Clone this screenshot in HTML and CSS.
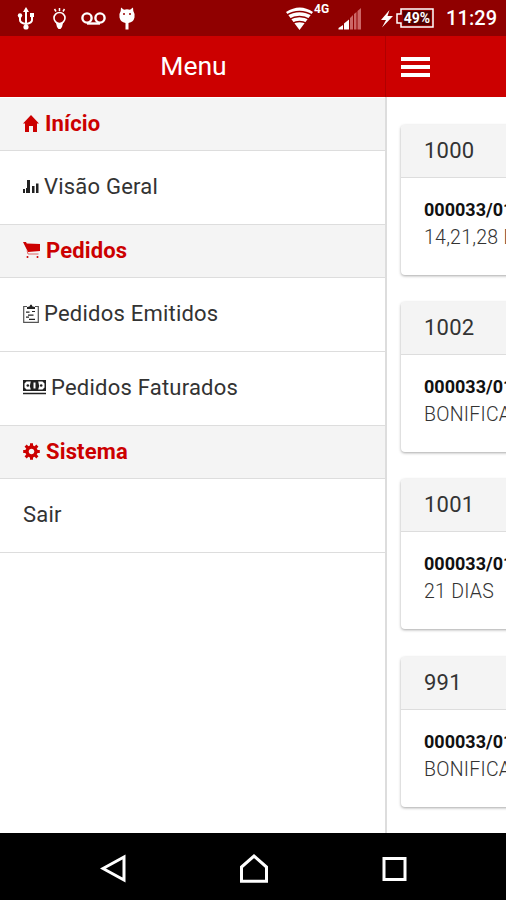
FILE: index.html
```html
<!DOCTYPE html>
<html lang="pt-BR">
<head>
    <meta charset="UTF-8">
    <meta name="viewport" content="width=device-width, initial-scale=1.0">
    <title>Menu</title>
    <link rel="stylesheet" href="styles.css">
</head>
<body>
    <!-- Status bar -->
    <div class="status-bar">
        <svg class="status-icons" width="140" height="36" viewBox="0 0 140 36">
            <!-- usb -->
            <g fill="none" stroke="#fff" stroke-width="2">
                <path d="M26 11v17M20 16v4q0 3 6 4M32 15v5q0 3-6 4"/>
            </g>
            <path d="M26 7l3 5h-6zM30 13h4v4h-4z" fill="#fff"/>
            <circle cx="20" cy="15.5" r="2.2" fill="#fff"/>
            <circle cx="26" cy="27" r="2.6" fill="#fff"/>
            <!-- light -->
            <circle cx="59.500" cy="18" r="5.500" fill="none" stroke="#fff" stroke-width="1.600"/>
            <path d="M56 23h7l-1 4-1.500 2h-2L57 27z" fill="#fff"/>
            <path d="M59.500 8v3M54.500 9l1.500 2.500M64.500 9L63 11.500" stroke="#fff" stroke-width="1.500"/>
            <!-- voicemail -->
            <g fill="none" stroke="#fff" stroke-width="2.400">
                <circle cx="87" cy="18" r="4.600"/>
                <circle cx="100" cy="18" r="4.600"/>
                <path d="M87 23.500h13"/>
            </g>
            <!-- debug droid -->
            <path d="M121 7.500l3 2.300q3-1 6 0l3-2.300.3 3.500q2 3 1.200 6.500-1 4.500-6 5.500v6.500h-3V23q-5-1-6-5.500-.8-3.500 1.200-6.500z" fill="#fff"/>
            <circle cx="124" cy="14" r="1" fill="#900"/>
            <circle cx="130" cy="14" r="1" fill="#900"/>
        </svg>
        <div class="status-right">
            <svg width="34" height="36" viewBox="284 0 34 36">
                <path d="M286 12q14-9 27 0l-13.500 18z" fill="#fff"/>
                <path d="M286 15.500q13.500-8 27 0M289 19.500q10.500-6 21 0M292 23.500q7.500-4 15 0" fill="none" stroke="#900000" stroke-width="1.300"/>
            </svg>
            <span class="network">4G</span>
            <svg class="signal" width="24" height="36" viewBox="338 0 24 36">
                <path d="M338.500 29.500V28l4.500-3v4.500zM344 29.500v-6l5-4v10z" fill="#fff"/>
                <path d="M350 29.500V18l3-3v14.500zM354 29.500V14l2.500-2v17.500zM357.500 29.500V11l3.500-3v21.500z" fill="#c66"/>
            </svg>
            <svg class="bolt" width="14" height="36" viewBox="380 0 14 36">
                <path d="M389.500 10l-8.500 10h5l-4 7.500 11-11.500h-5.500z" fill="#fff"/>
            </svg>
            <div class="battery">
                <svg width="40" height="22" viewBox="0 0 40 22">
                    <path d="M6 2h32v18H6v-4H2V7h4z" fill="#900000" stroke="#fff" stroke-width="1.500"/>
                    <path d="M8 4h28v14H8z" fill="#500000"/>
                </svg>
                <span>49%</span>
            </div>
            <span class="clock">11:29</span>
        </div>
    </div>

    <!-- Top bar -->
    <div class="top-bar">
        <div class="title">Menu</div>
        <div class="toggle">
            <span></span>
            <span></span>
            <span></span>
        </div>
    </div>

    <div class="content">
        <!-- Side menu -->
        <div class="side-menu">
            <div class="divider">
                <svg width="16" height="17" viewBox="0 0 16 17"><path d="M8 0l8 8.500h-2V17h-4v-6H6v6H2V8.500H0z"/></svg>
                Início
            </div>
            <div class="item">
                <svg width="16" height="16" viewBox="0 0 16 16"><path d="M0 11h2v4H0zM4 2h3v13H4zM9 8h2.500v7H9zM13 5.500h2.500V15H13zM3 10h1v5H3z"/></svg>
                Visão Geral
            </div>
            <div class="divider">
                <svg width="17" height="17" viewBox="0 0 17 17">
                    <path d="M0 0h3l.8 1.500L17 2v7L5 10z"/>
                    <path d="M4 8.500l1 3.500h10.500" fill="none" stroke="#d66" stroke-width="1"/>
                    <circle cx="4.500" cy="15" r="1"/><circle cx="14.500" cy="15" r="1"/>
                </svg>
                Pedidos
            </div>
            <div class="item">
                <svg width="16" height="19" viewBox="0 0 16 19">
                    <path d="M4 2.500H.700v15.800h14.600V2.500H12" fill="none" stroke="#555" stroke-width="1.200"/>
                    <path d="M4 5V3l2.500-.500Q8-1.500 9.500 2.500L12 3v2zM3 7.500h3.500v1.300H3zM5 10.500h5.500v1.200H5zM3 12.500h3v1.200H3zM6 14.800h6V16H6zM9 7h3v1H9z"/>
                </svg>
                Pedidos Emitidos
            </div>
            <div class="item">
                <svg width="23" height="15" viewBox="0 0 23 15">
                    <path d="M0 0h23v11H0zM0 12.700h23V14.200H0z"/>
                    <path d="M1.500 3.500l2-2h4.300Q6 5.500 7.800 9.500H3.500l-2-2zM21.500 3.500l-2-2h-4.300q1.800 4 0 8h4.300l2-2z" fill="#fff"/>
                    <path d="M10.500 2.500h2v6h-2z" fill="#fff"/>
                    <circle cx="4.800" cy="5.500" r="1.300"/><circle cx="18.200" cy="5.500" r="1.300"/>
                </svg>
                Pedidos Faturados
            </div>
            <div class="divider">
                <svg width="17" height="17" viewBox="-8.500 -8.500 17 17">
                    <circle r="4.500" fill="none" stroke="#cc0000" stroke-width="3.400"/>
                    <path d="M0-8.300V-5M0 5v3.300M-8.300 0H-5M5 0h3.300M-5.900-5.900L-4-4M4 4l1.900 1.900M-5.900 5.900L-4 4M4-4l1.900-1.900" stroke="#cc0000" stroke-width="3"/>
                </svg>
                Sistema
            </div>
            <div class="item">Sair</div>
        </div>

        <!-- Orders list -->
        <div class="orders">
            <div class="card">
                <div class="card-header">1000</div>
                <div class="card-body"><b>000033/01</b><p>14,21,28 DIAS</p></div>
            </div>
            <div class="card">
                <div class="card-header">1002</div>
                <div class="card-body"><b>000033/01</b><p>BONIFICACAO</p></div>
            </div>
            <div class="card">
                <div class="card-header">1001</div>
                <div class="card-body"><b>000033/01</b><p>21 DIAS</p></div>
            </div>
            <div class="card">
                <div class="card-header">991</div>
                <div class="card-body"><b>000033/01</b><p>BONIFICACAO</p></div>
            </div>
        </div>
    </div>

    <!-- Android navigation -->
    <div class="nav-bar">
        <svg width="28" height="30" viewBox="0 0 28 30"><path d="M24 4v23L3 15.500z"/></svg>
        <svg width="30" height="30" viewBox="0 0 30 30"><path d="M2.500 28.200V14L15 3l12.500 11v14.200z"/></svg>
        <svg width="28" height="30" viewBox="0 0 28 30"><path d="M4 5.500h21v21H4z"/></svg>
    </div>
</body>
</html>
```
FILE: styles.css
```css
/* General body styling */
body {
    margin: 0;
    width: 506px;
    height: 900px;
    display: flex;
    flex-direction: column;
    overflow: hidden;
    background-color: #fff;
    font-family: Roboto, sans-serif;
    color: #333;
}

svg {
    flex-shrink: 0;
}

/* Status bar */
.status-bar {
    height: 36px;
    display: flex;
    justify-content: space-between;
    background-color: #900000;
    color: #fff;
}

.status-right {
    width: 222px;
    display: flex;
    align-items: center;
}

.network {
    width: 20px;
    margin-left: -4px;
    margin-top: -19px;
    font-size: 12px;
    font-weight: 700;
}

.signal {
    margin-left: 4px;
}

.bolt {
    margin-left: 18px;
}

.battery {
    display: grid;
    width: 40px;
    height: 22px;
    margin-left: 1px;
}

/* Charge text sits on top of the battery shape */
.battery svg,
.battery span {
    grid-area: 1 / 1;
}

.battery span {
    padding-left: 4px;
    font-size: 14px;
    font-weight: 700;
    line-height: 22px;
    text-align: center;
}

.clock {
    margin-left: 11px;
    font-size: 20px;
    font-weight: 500;
    letter-spacing: 0.1px;
    line-height: 38px;
}

/* Top bar */
.top-bar {
    height: 61px;
    flex-shrink: 0;
    display: flex;
    align-items: center;
    background-color: #cc0000;
    color: #fff;
    box-sizing: border-box;
}

.title {
    width: 386px;
    height: 61px;
    box-sizing: border-box;
    border-right: 1px solid #b00000;
    text-align: center;
    font-size: 26.5px;
    line-height: 59px;
    padding-left: 2px;
}

.toggle {
    display: flex;
    flex-direction: column;
    gap: 4px;
    margin-left: 15px;
    padding-top: 1px;
}

.toggle span {
    width: 29px;
    height: 4px;
    background-color: #fff;
}

/* Page content */
.content {
    height: 736px;
    flex-shrink: 0;
    display: flex;
    overflow: hidden;
}

/* Side menu */
.side-menu {
    width: 385px;
    flex-shrink: 0;
    padding-top: 1px;
    border-right: 2px solid #ddd;
    box-sizing: content-box;
}

.divider,
.item {
    display: flex;
    align-items: center;
    box-sizing: border-box;
    padding-left: 23px;
    border-bottom: 1.5px solid #ddd;
    font-size: 22px;
}

.divider {
    height: 52.7px;
    gap: 6px;
    padding-bottom: 1px;
    background-color: #f4f4f4;
    color: #cc0000;
    font-weight: 700;
    letter-spacing: 0.15px;
}

.divider svg {
    fill: #cc0000;
}

.item {
    height: 74.2px;
    gap: 5px;
    padding-bottom: 2px;
    letter-spacing: 0.22px;
}

.item svg {
    fill: #222;
}

/* Orders list */
.orders {
    flex: 1;
    min-width: 0;
    padding: 28px 0 0 14px;
}

.card {
    width: 300px;
    height: 150px;
    margin-bottom: 27.2px;
    border-radius: 4px;
    background-color: #fff;
    box-shadow: 0 1px 3px rgba(0, 0, 0, 0.35);
    overflow: hidden;
}

.card-header {
    height: 53px;
    box-sizing: border-box;
    padding-left: 23px;
    background-color: #f4f4f4;
    border-bottom: 1px solid #ddd;
    font-size: 22px;
    line-height: 51px;
    letter-spacing: 0.2px;
}

.card-body {
    padding: 18px 23px;
    font-size: 18px;
    line-height: 28px;
}

.card-body b {
    color: #111;
}

.card-body p {
    margin: 0;
    font-size: 19.5px;
    font-weight: 300;
    letter-spacing: 0.25px;
    color: #333;
}

/* Android navigation */
.nav-bar {
    height: 67px;
    flex-shrink: 0;
    display: flex;
    align-items: center;
    justify-content: space-between;
    box-sizing: border-box;
    padding: 3px 98px 0 100px;
    background-color: #000;
}

.nav-bar svg {
    fill: none;
    stroke: #fff;
    stroke-width: 3;
}
```
